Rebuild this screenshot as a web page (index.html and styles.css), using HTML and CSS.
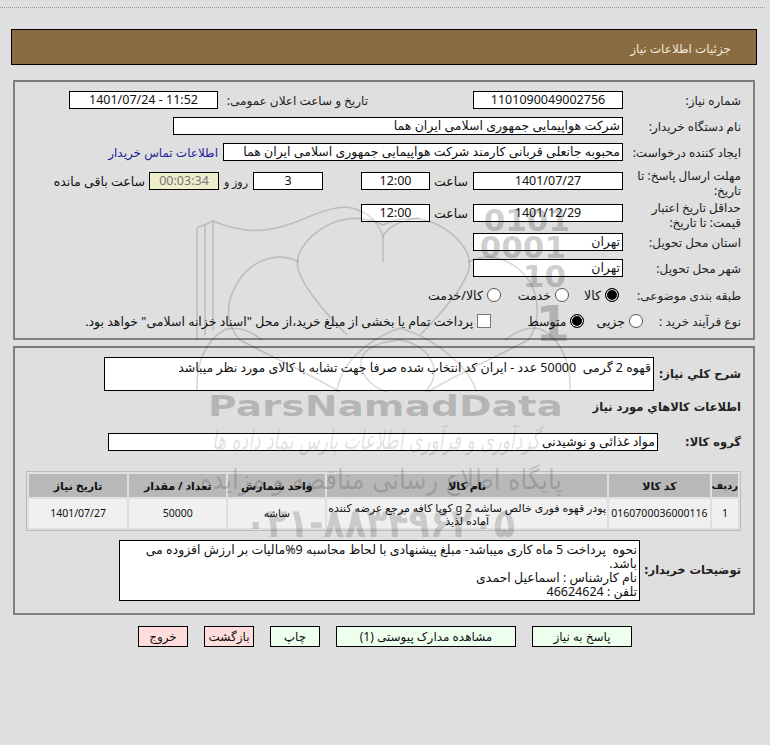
FILE: index.html
```html
<!DOCTYPE html>
<html lang="fa" dir="rtl">
<head>
<meta charset="utf-8">
<title>جزئیات اطلاعات نیاز</title>
<link rel="stylesheet" href="styles.css">
</head>
<body>
<div class="topline"></div>
<header class="titlebar">جزئیات اطلاعات نیاز</header>

<section class="panel panel-info">
  <div class="row">
    <div class="label">شماره نیاز:</div>
    <div class="field w150 center">1101090049002756</div>
    <div class="label pub">تاریخ و ساعت اعلان عمومی:</div>
    <div class="field w149 center">11:52 - 1401/07/24</div>
  </div>
  <div class="row">
    <div class="label">نام دستگاه خریدار:</div>
    <div class="field w450">شرکت هواپیمایی جمهوری اسلامی ایران هما</div>
  </div>
  <div class="row">
    <div class="label">ایجاد کننده درخواست:</div>
    <div class="field w400">محبوبه جانعلی قربانی کارمند شرکت هواپیمایی جمهوری اسلامی ایران هما</div>
    <a class="contact" href="#">اطلاعات تماس خریدار</a>
  </div>
  <div class="row row-gap11">
    <div class="label two-line">مهلت ارسال پاسخ: تا تاریخ:</div>
    <div class="field w150 center">1401/07/27</div>
    <div class="unit u-hour">ساعت</div>
    <div class="field w69 center">12:00</div>
    <div class="field w70 center m-days">3</div>
    <div class="unit u-days">روز و</div>
    <div class="field w70 center timer">00:03:34</div>
    <div class="unit u-left">ساعت باقی مانده</div>
  </div>
  <div class="row row-gap14">
    <div class="label two-line">حداقل تاریخ اعتبار قیمت: تا تاریخ:</div>
    <div class="field w150 center">1401/12/29</div>
    <div class="unit u-hour">ساعت</div>
    <div class="field w69 center">12:00</div>
  </div>
  <div class="row row-gap11">
    <div class="label">استان محل تحویل:</div>
    <div class="field w150">تهران</div>
  </div>
  <div class="row">
    <div class="label">شهر محل تحویل:</div>
    <div class="field w150">تهران</div>
  </div>
  <div class="row row-gap9">
    <div class="label">طبقه بندی موضوعی:</div>
    <div class="choice c-kala"><span class="radio on"></span>کالا</div>
    <div class="choice c-khedmat"><span class="radio"></span>خدمت</div>
    <div class="choice c-both"><span class="radio"></span>کالا/خدمت</div>
  </div>
  <div class="row">
    <div class="label label-short">نوع فرآیند خرید :</div>
    <div class="choice"><span class="radio"></span>جزیی</div>
    <div class="choice c-motevaset"><span class="radio on"></span>متوسط</div>
    <div class="choice c-pay"><span class="check"></span>پرداخت تمام یا بخشی از مبلغ خرید،از محل "اسناد خزانه اسلامی" خواهد بود.</div>
  </div>
</section>

<section class="panel panel-goods">
  <div class="desc-row">
    <div class="label strong label-desc">شرح کلي نياز:</div>
    <div class="field desc">قهوه 2 گرمی&nbsp; 50000 عدد - ایران کد انتخاب شده صرفا جهت تشابه با کالای مورد نظر میباشد</div>
  </div>
  <h2 class="subhead">اطلاعات کالاهاي مورد نياز</h2>
  <div class="row group-row">
    <div class="label strong label-group">گروه کالا:</div>
    <div class="field group">مواد غذائی و نوشیدنی</div>
  </div>
  <table class="goods">
    <thead>
      <tr>
        <th class="col-i">رديف</th>
        <th class="col-code">کد کالا</th>
        <th class="col-name">نام کالا</th>
        <th class="col-unit">واحد شمارش</th>
        <th class="col-qty">تعداد / مقدار</th>
        <th class="col-date">تاریخ نیاز</th>
      </tr>
    </thead>
    <tbody>
      <tr>
        <td>1</td>
        <td>0160700036000116</td>
        <td class="name">پودر قهوه فوری خالص ساشه 2 g کوپا کافه مرجع عرضه کننده آماده لذیذ</td>
        <td>ساشه</td>
        <td>50000</td>
        <td>1401/07/27</td>
      </tr>
    </tbody>
  </table>
  <div class="note-row">
    <div class="label strong label-note">توضیحات خریدار:</div>
    <div class="field note">نحوه&nbsp; پرداخت 5 ماه کاری میباشد- مبلغ پیشنهادی با لحاظ محاسبه 9%مالیات بر ارزش افزوده می باشد.<br>نام کارشناس : اسماعیل احمدی<br>تلفن : 46624624</div>
  </div>
</section>

<nav class="actions">
  <button class="btn ok w100" type="button">پاسخ به نیاز</button>
  <button class="btn ok w180" type="button">مشاهده مدارک پیوستی (1)</button>
  <button class="btn ok w50" type="button">چاپ</button>
  <button class="btn no w50" type="button">بازگشت</button>
  <button class="btn no w50" type="button">خروج</button>
</nav>

<svg class="watermark" viewBox="0 0 770 745" width="770" height="745" aria-hidden="true">
  <g class="wm-lines">
    <path d="M197 340V228L213 221M205 335V224M213 330V221C240 232 262 234 290 224C312 216 335 204 352 208C368 212 378 222 383 236C390 224 404 220 420 218"/>
    <path d="M383 236V262"/>
    <path d="M383 225C366 216 345 216 326 226C305 238 293 256 299 272C305 290 330 318 347 335"/>
    <path d="M383 225C400 216 421 216 440 226C461 238 474 256 468 272C462 290 437 318 420 335"/>
    <path d="M299 262C275 250 250 262 238 282C224 304 226 325 240 340C270 356 312 375 340 392"/>
    <path d="M468 262C492 250 517 262 530 282C540 300 540 325 528 340C498 356 455 375 428 392"/>
    <path d="M197 390C196 364 205 340 226 329C240 326 252 332 262 340"/>
    <path d="M570 390C571 364 562 340 541 329C527 326 515 332 505 340"/>
    <path d="M337 392C340 364 366 340 400 328C440 340 470 370 477 392"/>
    <path d="M387 392C360 384 340 345 400 340C430 345 445 372 425 392"/>
  </g>
  <g class="wm-text">
    <text class="wm-bin" x="570" y="231" text-anchor="end">0101</text>
    <text class="wm-bin" x="566" y="258" text-anchor="end">0001</text>
    <text class="wm-bin" x="566" y="287" text-anchor="end">10</text>
    <text class="wm-bin wm-bin-big" x="570" y="341" text-anchor="end">1</text>
    <text class="wm-brand" x="208" y="416" textLength="355" lengthAdjust="spacingAndGlyphs">ParsNamadData</text>
    <text class="wm-script" x="540" y="449" textLength="328" lengthAdjust="spacingAndGlyphs">گردآوری و فرآوری اطلاعات پارس نماد داده ها</text>
    <text class="wm-slogan" x="562" y="489" textLength="362" lengthAdjust="spacingAndGlyphs">پایگاه اطلاع رسانی مناقصه و مزایده</text>
    <text class="wm-phone" x="245" y="537" textLength="270" lengthAdjust="spacingAndGlyphs">۰۲۱-۸۸۳۴۹۶۲۰۵</text>
  </g>
</svg>
</body>
</html>
```

FILE: styles.css
```css
* { box-sizing: border-box; }
html, body { margin: 0; padding: 0; }
body {
  position: relative;
  width: 770px;
  height: 745px;
  overflow: hidden;
  background: #dfdfdf;
  color: #111;
  font: 12px/15px "Noto Sans", "DejaVu Sans", sans-serif;
}
.topline { height: 8px; margin-right: 5px; border-bottom: 1px dotted #999; }
.titlebar {
  height: 36px;
  margin: 21px 13px 0 11px;
  padding: 0 25px;
  border: 1px solid #000;
  background: #8b6b41;
  color: #eee8da;
  line-height: 38px;
}
.panel {
  margin: 0 15px 0 13px;
  border: 2px solid #808080;
  border-top-color: #7a7a7a;
}
.panel-info { height: 260px; margin-top: 15px; padding: 9px 12px 0 0; }
.panel-goods { height: 269px; margin-top: 6px; padding: 9px 12px 0 0; }

.row { display: flex; align-items: center; height: 18px; margin-bottom: 8px; }
.row-gap11 { margin-top: 11px; }
.row-gap14 { margin-top: 14px; }
.row-gap9 { margin-top: 9px; }
.label { flex: none; width: 118px; color: #222; }
.two-line { padding-top: 3px; padding-left: 8px; }
.label-short { width: 98px; }
.label-desc { width: 87px; }
.label-group { width: 83px; }
.label-note { width: 101px; }
.strong { font-weight: bold; font-size: 11.5px; font-family: "DejaVu Sans", sans-serif; white-space: nowrap; }
.field {
  flex: none;
  height: 18px;
  padding: 0 2px;
  border: 1px solid #000;
  background: #fff;
  font-size: 12.5px;
  white-space: nowrap;
  overflow: hidden;
  line-height: 16px;
}
.center { text-align: center; }
.w150 { width: 150px; }
.w149 { width: 149px; }
.w450 { width: 450px; }
.w400 { width: 400px; }
.w70 { width: 70px; }
.w69 { width: 69px; }
.pub { width: 150px; margin-right: 105px; white-space: nowrap; }
.contact { margin-right: 5px; color: #22229a; text-decoration: none; white-space: nowrap; }
.unit { flex: none; font-size: 12.5px; white-space: nowrap; }
.u-hour { width: 38px; margin-right: 5px; }
.m-days { margin-right: 38px; }
.u-days { width: 29px; margin-right: 5px; font-size: 11px; }
.u-left { margin-right: 4px; }
.timer { background: #eeeecc; color: #777; }

.choice { display: flex; align-items: center; flex: none; font-size: 12.5px; white-space: nowrap; }
.radio, .check { flex: none; display: block; background: #fff; }
.radio { width: 14px; height: 14px; margin-left: 4px; border: 1px solid #555; border-radius: 50%; }
.radio.on { background: #000; border: 1px solid #000; box-shadow: inset 0 0 0 1px #fff; }
.check { width: 14px; height: 14px; margin-left: 4px; border: 1px solid #777; }
.c-kala { margin-right: 4px; }
.c-khedmat { margin-right: 15px; }
.c-both { margin-right: 17px; }
.c-motevaset { margin-right: 12px; }
.c-pay { margin-right: 36px; }

.desc-row { display: flex; align-items: center; height: 34px; }
.desc { width: 550px; height: 34px; white-space: normal; padding-top: 2px; }
.subhead { margin: 9px 0 0; font: bold 11.5px/15px "DejaVu Sans", sans-serif; color: #222; }
.group-row { margin: 18px 0 0; }
.group { width: 550px; text-align: right; }
.goods {
  width: 715px;
  margin-top: 20px;
  border: 1px solid #bbb;
  border-spacing: 2px;
  table-layout: fixed;
  text-align: center;
  font-size: 10.5px;
}
.goods th { height: 23px; background: #b8b8b8; font-size: 11px; font-weight: bold; padding: 0; color: #111; }
.goods td { height: 29px; background: #f0f0f0; padding: 0; }
.goods .name { font-size: 11px; line-height: 13px; }
.goods .col-i { width: 26px; font-size: 10px; }
.col-code { width: 101px; }
.col-name { width: 279px; }
.col-unit { width: 97px; }
.col-qty { width: 97px; }
.col-date { width: 98px; }
.note-row { display: flex; align-items: center; margin-top: 9px; }
.note { width: 521px; height: 61px; white-space: normal; line-height: 14px; padding: 2px 2px 0 12px; }

.actions { display: flex; justify-content: center; gap: 16px; margin-top: 11px; }
.btn {
  height: 21px;
  padding: 0;
  border: 1px solid #000;
  color: #111;
  font: inherit;
  white-space: nowrap;
}
.ok { background: #eeffee; }
.no { background: #ffdddd; }
.w100 { width: 100px; }
.w180 { width: 180px; }
.w50 { width: 50px; }

.watermark { position: absolute; left: 0; top: 0; pointer-events: none; direction: ltr; }
.wm-lines { fill: none; stroke: #000; stroke-opacity: .15; stroke-width: 1.6; }
.wm-text { fill: #000; fill-opacity: .2; }
.wm-bin { font: bold 31px "DejaVu Sans", sans-serif; }
.wm-bin-big { font-size: 50px; }
.wm-brand { font: bold 29px "DejaVu Sans", sans-serif; }
.wm-script { font: italic 26px "DejaVu Sans", sans-serif; fill-opacity: .13; direction: rtl; }
.wm-slogan { font: 28px "DejaVu Sans", sans-serif; fill-opacity: .16; direction: rtl; }
.wm-phone { font: bold 40px "DejaVu Sans", sans-serif; fill-opacity: .18; }
```
